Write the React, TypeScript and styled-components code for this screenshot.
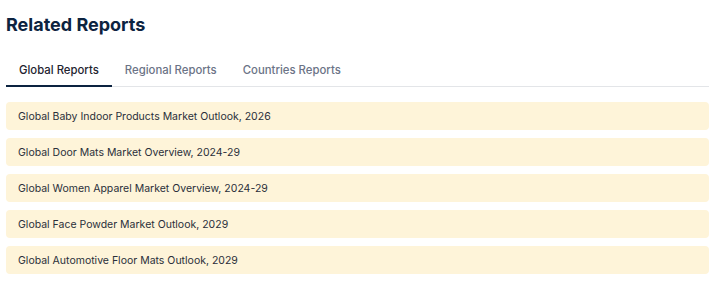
import React, { useState } from 'react';
import styled, { createGlobalStyle } from 'styled-components';

const GlobalStyle = createGlobalStyle`
  body {
    margin: 0;
    background: #fff;
    font-family: Inter, 'Noto Sans', sans-serif;
  }
`;

const Wrapper = styled.section`
  padding: 13px 3px 0 6px;
`;

const Title = styled.h2`
  margin: 0;
  font-size: 18px;
  line-height: 24px;
  font-weight: 700;
  color: #0c2340;
`;

const TabBar = styled.div`
  display: flex;
  margin-top: 15px;
  border-bottom: 1px solid #e3e5e8;
`;

const Tab = styled.button<{ $active?: boolean }>`
  border: none;
  background: none;
  padding: 10px 13px 7px;
  margin-bottom: -1px;
  font-family: inherit;
  font-size: 11.35px;
  line-height: 16px;
  font-weight: 500;
  color: ${(p) => (p.$active ? '#1f2430' : '#6b7386')};
  border-bottom: 2px solid ${(p) => (p.$active ? '#0c2340' : 'transparent')};
  cursor: pointer;
`;

const List = styled.ul`
  list-style: none;
  margin: 15px 0 0;
  padding: 0;
  display: flex;
  flex-direction: column;
  gap: 8px;
`;

const Item = styled.li`
  background: #fef4d9;
  border-radius: 4px;
  height: 28px;
  display: flex;
  align-items: center;
  padding: 0 12px;
  font-size: 10.5px;
  color: #2a2f3a;
`;

const tabs = ['Global Reports', 'Regional Reports', 'Countries Reports'];

const reports = [
  'Global Baby Indoor Products Market Outlook, 2026',
  'Global Door Mats Market Overview, 2024-29',
  'Global Women Apparel Market Overview, 2024-29',
  'Global Face Powder Market Outlook, 2029',
  'Global Automotive Floor Mats Outlook, 2029',
];

export default function App() {
  const [active, setActive] = useState(0);
  return (
    <Wrapper>
      <GlobalStyle />
      <Title>Related Reports</Title>
      <TabBar>
        {tabs.map((t, i) => (
          <Tab key={t} $active={i === active} onClick={() => setActive(i)}>
            {t}
          </Tab>
        ))}
      </TabBar>
      <List>
        {reports.map((r) => (
          <Item key={r}>{r}</Item>
        ))}
      </List>
    </Wrapper>
  );
}
